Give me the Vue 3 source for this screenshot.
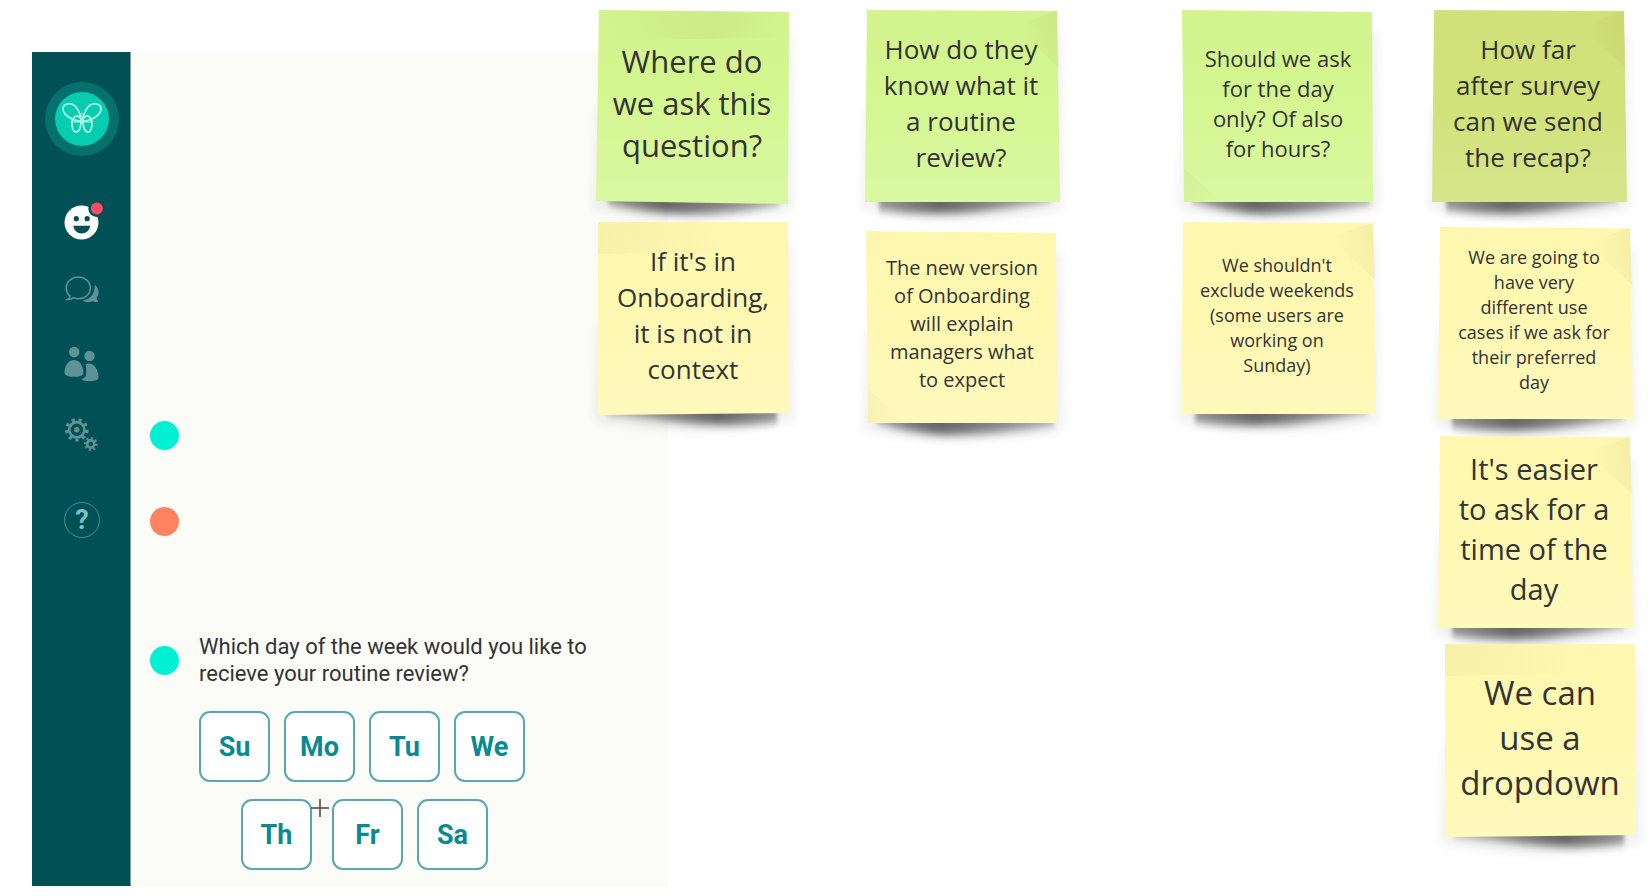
<template>
  <main class="board">
    <svg class="defs" width="0" height="0" aria-hidden="true">
      <defs>
        <linearGradient id="paper-green" x1="0" y1="0" x2="0" y2="1">
          <stop offset="0" stop-color="#d2f38e" />
          <stop offset="0.4" stop-color="#d4f68f" />
          <stop offset="1" stop-color="#daf8a2" />
        </linearGradient>
        <linearGradient id="paper-olive" x1="0" y1="0" x2="0" y2="1">
          <stop offset="0" stop-color="#d0e179" />
          <stop offset="0.5" stop-color="#d1e27a" />
          <stop offset="1" stop-color="#d6e58b" />
        </linearGradient>
        <linearGradient id="paper-yellow" x1="0" y1="0" x2="0" y2="1">
          <stop offset="0" stop-color="#fef7b0" />
          <stop offset="0.4" stop-color="#fff8b1" />
          <stop offset="1" stop-color="#fff9bc" />
        </linearGradient>
        <linearGradient id="shade-left" x1="0" y1="0" x2="1" y2="0">
          <stop offset="0" stop-color="#000" stop-opacity="0.38" />
          <stop offset="0.35" stop-color="#000" stop-opacity="0.58" />
          <stop offset="1" stop-color="#000" stop-opacity="0.3" />
        </linearGradient>
        <linearGradient id="shade-right" x1="1" y1="0" x2="0" y2="0">
          <stop offset="0" stop-color="#000" stop-opacity="0.38" />
          <stop offset="0.35" stop-color="#000" stop-opacity="0.58" />
          <stop offset="1" stop-color="#000" stop-opacity="0.3" />
        </linearGradient>
        <linearGradient id="band" x1="0" y1="0" x2="1" y2="0">
          <stop offset="0" stop-color="#7a7000" stop-opacity="0.05" />
          <stop offset="1" stop-color="#7a7000" stop-opacity="0" />
        </linearGradient>
        <linearGradient id="band-middle" x1="0" y1="0" x2="1" y2="0">
          <stop offset="0" stop-color="#7a7000" stop-opacity="0" />
          <stop offset="0.6" stop-color="#7a7000" stop-opacity="0.06" />
          <stop offset="1" stop-color="#7a7000" stop-opacity="0" />
        </linearGradient>
        <linearGradient id="fold" x1="1" y1="0.4" x2="0.2" y2="0.6">
          <stop offset="0" stop-color="#7a7000" stop-opacity="0.07" />
          <stop offset="1" stop-color="#7a7000" stop-opacity="0" />
        </linearGradient>
        <filter id="soft" x="-20%" y="-60%" width="140%" height="260%">
          <feGaussianBlur stdDeviation="2 4" />
        </filter>
        <filter id="faint" x="-20%" y="-20%" width="140%" height="140%">
          <feGaussianBlur stdDeviation="5" />
        </filter>
      </defs>
    </svg>

    <section class="frame">
      <nav class="sidebar" aria-label="Main">
        <a class="logo" href="#" aria-label="Home">
          <svg viewBox="0 0 74 74" width="74" height="74">
            <circle cx="37" cy="37" r="37" fill="#04716d" />
            <circle cx="37" cy="37" r="27" fill="#07cdb0" />
            <g fill="none" stroke="#b4f7e6" stroke-width="1.7">
              <path d="M36 39C28 39 18 33 18 27C18 21 27 20 31 25C34 29 36 33 36 39Z" />
              <path d="M38 39C46 39 56 33 56 27C56 21 47 20 43 25C40 29 38 33 38 39Z" />
              <path d="M36 38C36 46 34 50 31 50C27 50 26 40 28 37C30 33 33 33 35 36" />
              <path d="M38 38C38 46 40 50 43 50C47 50 48 40 46 37C44 33 41 33 39 36" />
              <path d="M26 40H48M37 31V42" stroke-width="1" />
            </g>
          </svg>
        </a>
        <button type="button" class="nav-item" aria-label="Mood">
          <svg viewBox="0 0 40 40" width="40" height="40">
            <circle cx="19.5" cy="20.5" r="17" fill="#fff" />
            <circle cx="34.8" cy="6.5" r="8.5" fill="#005055" />
            <circle cx="34.8" cy="6.5" r="6" fill="#ff4b68" />
            <circle cx="14.3" cy="16.7" r="2.6" fill="#005055" />
            <circle cx="25.2" cy="16.7" r="2.6" fill="#005055" />
            <path d="M11.3 23.7H28.2C27.5 28.6 24 31.4 19.7 31.4S12 28.6 11.3 23.7Z" fill="#005055" />
          </svg>
        </button>
        <button type="button" class="nav-item" aria-label="Conversations">
          <svg viewBox="0 0 40 40" width="40" height="40">
            <path d="M8 24.3C5.5 22 4.3 19 4.3 16C4.3 9.8 9.6 5 16.3 5S28.3 9.8 28.3 16S23 26.8 16.3 26.8C14.6 26.8 13 26.4 11.5 25.8C10 27 8.2 27.5 5.5 27.4C7 26.6 7.8 25.6 8 24.3Z" fill="none" stroke="#5f9297" stroke-width="1.6" />
            <path d="M33.2 13.5C36.8 17.5 36.9 22.5 34 26C34.4 27.7 35 28.6 36 29.4C33.5 29.8 32 29.3 30.8 28.7C28 30 24.5 30 21.5 28.7C28.5 27.5 33.5 21.5 33.2 13.5Z" fill="#5f9297" stroke="#5f9297" stroke-width="1" />
          </svg>
        </button>
        <button type="button" class="nav-item" aria-label="People">
          <svg viewBox="0 0 40 40" width="40" height="40" fill="#5f9297">
            <circle cx="12.2" cy="10" r="5.3" />
            <path d="M2.5 31C2.5 24 6 18 12 18S21.3 24 21.3 31C21.3 34 16 34.8 12 34.8S2.5 34 2.5 31Z" />
            <circle cx="27.5" cy="14" r="5.2" />
            <path d="M23.5 22.5C30 19 36.5 26 36.5 35.5C36.5 38.5 32 39.2 27.5 39.2C23.5 39.2 20.5 38.5 19.5 37C22.5 36 24.3 34.5 24.3 31.5C24.3 28.5 24.2 25 23.5 22.5Z" />
          </svg>
        </button>
        <button type="button" class="nav-item" aria-label="Settings">
          <svg viewBox="0 0 40 40" width="40" height="40" fill="none" stroke="#5f9297">
            <circle cx="14.8" cy="17.8" r="7.6" stroke-width="2.8" />
            <circle cx="14.8" cy="17.8" r="10.2" stroke-width="3.2" pathLength="18" stroke-dasharray="0.9 1.1" />
            <circle cx="14.8" cy="17.8" r="2.7" fill="#5f9297" stroke="none" />
            <circle cx="28.8" cy="32" r="3.6" stroke-width="2.6" />
            <circle cx="28.8" cy="32" r="5.6" stroke-width="2.6" pathLength="16" stroke-dasharray="0.9 1.1" />
          </svg>
        </button>
        <button type="button" class="nav-item help" aria-label="Help">?</button>
      </nav>

      <div class="chat">
        <div class="message"><span class="dot teal"></span></div>
        <div class="message"><span class="dot orange"></span></div>
        <div class="message question">
          <span class="dot teal"></span>
          <p id="question">Which day of the week would you like to<br />recieve your routine review?</p>
        </div>
        <div class="days" role="group" aria-labelledby="question">
          <div class="day-row">
            <button v-for="day in firstRow" :key="day" type="button" class="day">{{ day }}</button>
          </div>
          <div class="day-row second">
            <button v-for="day in secondRow" :key="day" type="button" class="day">{{ day }}</button>
            <svg class="cursor" viewBox="0 0 18 18" width="18" height="18" aria-hidden="true">
              <path d="M9 0V18M0 9H18" stroke="#444" stroke-width="1.5" />
            </svg>
          </div>
        </div>
      </div>
    </section>

    <article
      v-for="note in notes"
      :key="note.text"
      class="note"
      :class="'text-' + note.size"
      :style="{ left: note.x + 'px', top: note.y + 'px' }"
    >
      <svg class="paper" viewBox="0 0 194 192" aria-hidden="true">
        <path d="M0 100L-4 200Q97 220 198 200L196 20Z" fill="#000" opacity="0.05" filter="url(#faint)" />
        <path :d="shapes[note.shape].shadow" :fill="shapes[note.shape].shade" filter="url(#soft)" />
        <path :d="shapes[note.shape].outline" :fill="'url(#paper-' + note.color + ')'" />
        <path :d="shapes[note.shape].crease" :fill="shapes[note.shape].tone" />
      </svg>
      <p>{{ note.text }}</p>
    </article>
  </main>
</template>

<script setup>
const firstRow = ['Su', 'Mo', 'Tu', 'We']
const secondRow = ['Th', 'Fr', 'Sa']

// paper outlines, each one is bent a little differently
const shapes = {
  tilted: {
    outline: 'M3 0L193 2L192 194L0 191Z',
    shadow: 'M8 182L184 184V194Q140 204 90 204Q50 203 14 194Z',
    shade: 'url(#shade-left)',
    crease: 'M3 0L193 2V27L2 31Z',
    tone: 'url(#band-middle)'
  },
  liftRight: {
    outline: 'M1 0H191L192 191L1 193Z',
    shadow: 'M10 183L180 182V200Q130 206 80 200Q40 195 10 192Z',
    shade: 'url(#shade-right)',
    crease: 'M1 0H130V30L1 32Z',
    tone: 'url(#band)'
  },
  liftLeft: {
    outline: 'M2 0L192 1L195 192H0Z',
    shadow: 'M14 182H186V191Q150 198 110 202Q60 206 14 200Z',
    shade: 'url(#shade-left)',
    crease: 'M148 16L192 1L194 58Z',
    tone: 'url(#fold)'
  },
  flat: {
    outline: 'M0 0L190 2L191 192H2Z',
    shadow: 'M10 182H188V194Q130 204 80 204Q45 203 10 191Z',
    shade: 'url(#shade-left)',
    crease: 'M2 158L40 192H2Z',
    tone: 'url(#band)'
  }
}

const notes = [
  { x: 596, y: 10, color: 'green', shape: 'tilted', size: 31, text: 'Where do\nwe ask this\nquestion?' },
  { x: 597, y: 222, color: 'yellow', shape: 'liftRight', size: 26, text: "If it's in\nOnboarding,\nit is not in\ncontext" },
  { x: 865, y: 10, color: 'green', shape: 'liftLeft', size: 26, text: 'How do they\nknow what it\na routine\nreview?' },
  { x: 866, y: 231, color: 'yellow', shape: 'flat', size: 20, text: 'The new version\nof Onboarding\nwill explain\nmanagers what\nto expect' },
  { x: 1182, y: 10, color: 'green', shape: 'flat', size: 22, text: 'Should we ask\nfor the day\nonly? Of also\nfor hours?' },
  { x: 1181, y: 222, color: 'yellow', shape: 'liftLeft', size: 18, text: "We shouldn't\nexclude weekends\n(some users are\nworking on\nSunday)" },
  { x: 1432, y: 10, color: 'olive', shape: 'liftLeft', size: 26, text: 'How far\nafter survey\ncan we send\nthe recap?' },
  { x: 1438, y: 227, color: 'yellow', shape: 'liftLeft', size: 18, text: 'We are going to\nhave very\ndifferent use\ncases if we ask for\ntheir preferred\nday' },
  { x: 1438, y: 436, color: 'yellow', shape: 'liftLeft', size: 29, text: "It's easier\nto ask for a\ntime of the\nday" },
  { x: 1444, y: 644, color: 'yellow', shape: 'liftRight', size: 33, text: 'We can\nuse a\ndropdown' }
]
</script>

<style>
body {
  margin: 0;
  background: #fff;
}
</style>

<style scoped>
.board {
  position: relative;
  box-sizing: border-box;
  min-height: 100vh;
  padding: 52px 0 9px 32px;
  overflow: hidden;
  font-family: "Open Sans", "Noto Sans", sans-serif;
}

.defs {
  position: absolute;
}

p {
  margin: 0;
}

.frame {
  display: flex;
  width: 39.3%;
  min-width: 560px;
  background: #fbfbf8;
}

.sidebar {
  display: flex;
  flex-direction: column;
  align-items: center;
  gap: 30px;
  box-sizing: border-box;
  width: 99px;
  flex: none;
  padding: 30px 0 0 2px;
  border-right: 1px solid #809a9b;
  background: #005055;
}

.logo {
  height: 74px;
  margin-bottom: 16px;
}

.nav-item {
  width: 40px;
  height: 40px;
  padding: 0;
  border: none;
  background: none;
  cursor: pointer;
}

.nav-item svg {
  display: block;
  overflow: visible;
}

.help {
  width: 36px;
  height: 36px;
  margin-top: 20px;
  border: 1px solid #3b969c;
  border-radius: 50%;
  color: #7cc0c8;
  font: bold 27px/34px Roboto, sans-serif;
}

.chat {
  display: flex;
  flex-direction: column;
  flex: 1;
  padding: 369px 20px 16px 19px;
  font-family: Roboto, sans-serif;
}

.message {
  display: flex;
  align-items: center;
  gap: 20px;
  margin-bottom: 57px;
}

.question {
  margin: 40px 0 24px;
  color: #333;
  font-size: 22px;
  line-height: 27px;
}

.dot {
  flex: none;
  width: 29px;
  height: 29px;
  border-radius: 50%;
}

.teal {
  background: #00f0d4;
}

.orange {
  background: #ff8360;
}

.days {
  display: flex;
  flex-direction: column;
  gap: 17px;
  padding-left: 49px;
}

.day-row {
  display: flex;
  gap: 14px;
}

.second {
  position: relative;
  padding-left: 42px;
}

.second .day:first-child {
  margin-right: 6px;
}

.day {
  width: 71px;
  height: 71px;
  padding: 0;
  border: 2px solid #58a9ae;
  border-radius: 11px;
  background: #fff;
  color: #078a91;
  font: bold 27px/32px Roboto, sans-serif;
  cursor: pointer;
}

.cursor {
  position: absolute;
  left: 112px;
  top: 0;
}

.note {
  position: absolute;
  display: flex;
  align-items: center;
  justify-content: center;
  box-sizing: border-box;
  width: 194px;
  height: 192px;
  padding: 0 2px 6px 0;
  color: #333;
  text-align: center;
  white-space: pre;
}

.paper {
  position: absolute;
  inset: 0;
  width: 194px;
  height: 192px;
  overflow: visible;
}

.note p {
  position: relative;
}

.text-18 {
  font-size: 18px;
  line-height: 25px;
}

.text-20 {
  font-size: 20px;
  line-height: 28px;
}

.text-22 {
  font-size: 22px;
  line-height: 30px;
}

.text-26 {
  font-size: 26px;
  line-height: 36px;
}

.text-29 {
  font-size: 29px;
  line-height: 40px;
}

.text-31 {
  font-size: 31px;
  line-height: 42px;
}

.text-33 {
  font-size: 33px;
  line-height: 45px;
}
</style>
